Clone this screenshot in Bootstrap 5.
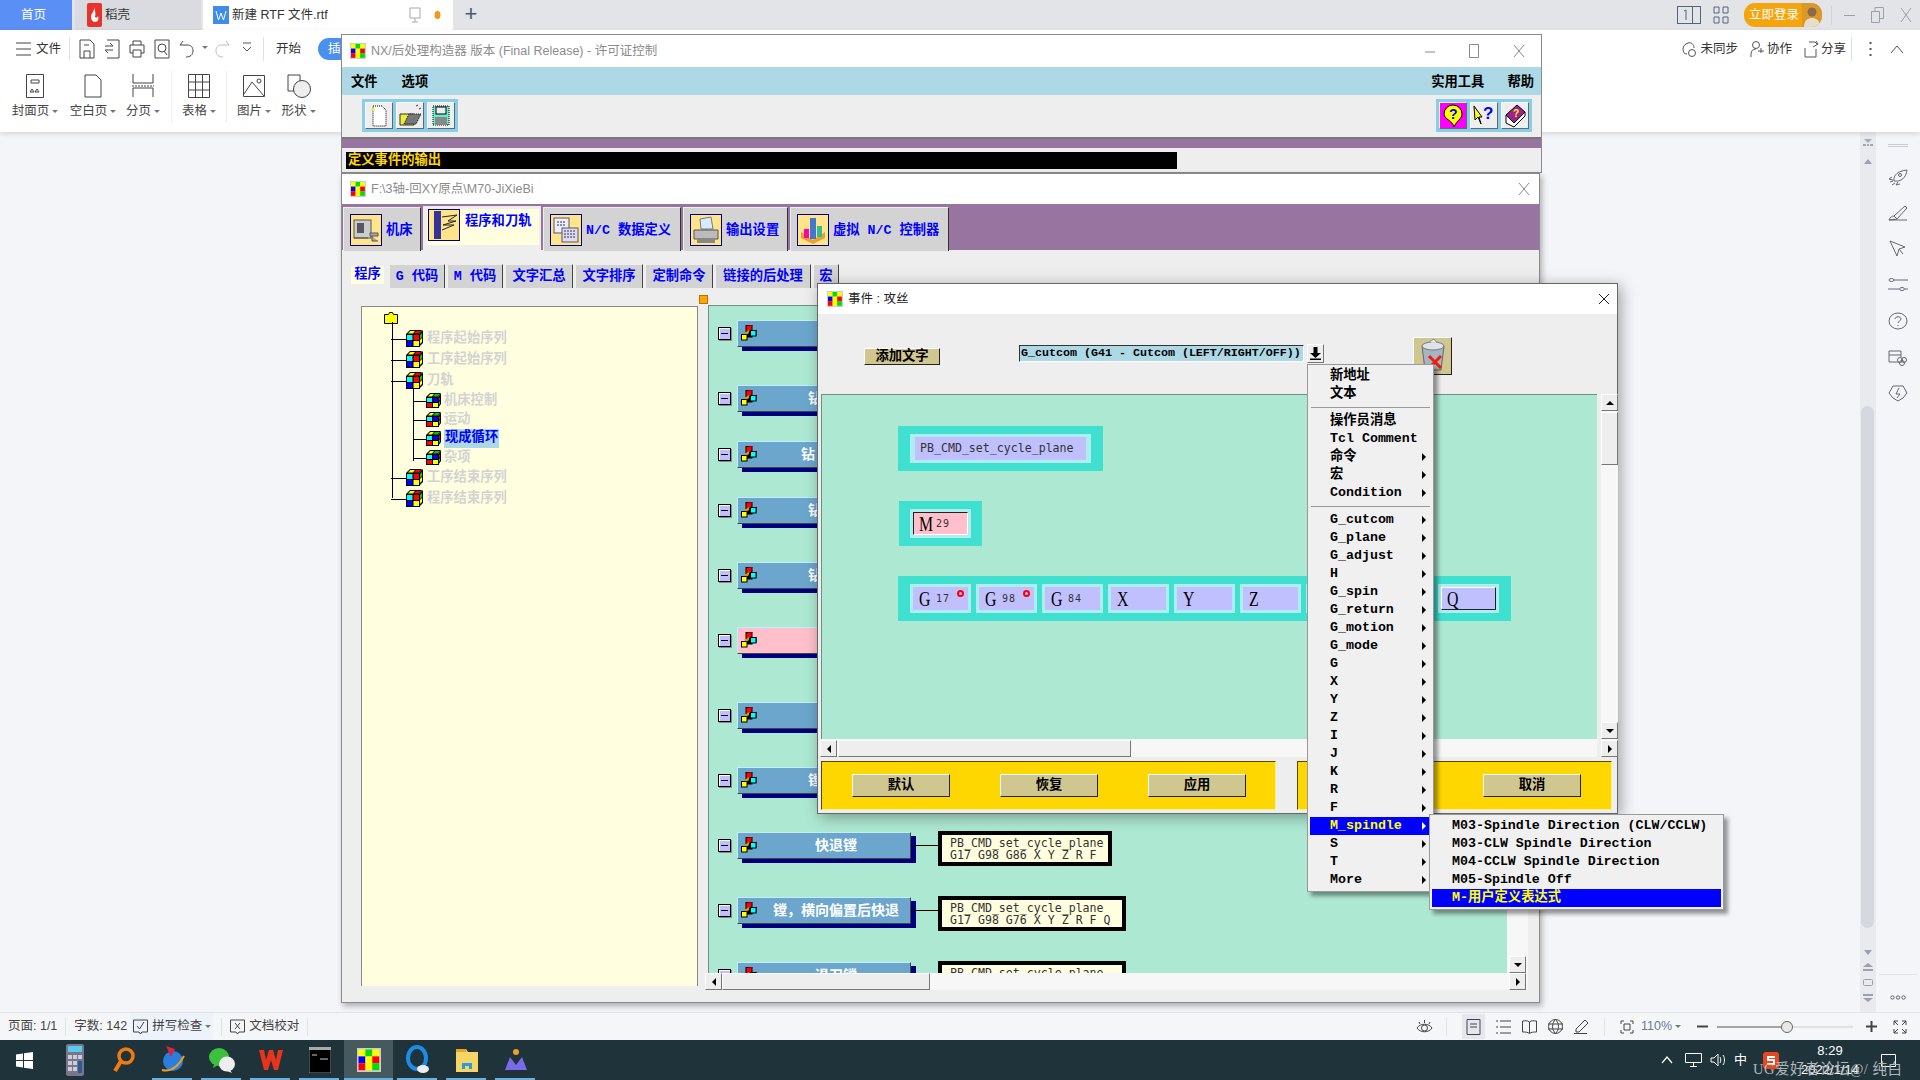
<!DOCTYPE html>
<html>
<head>
<meta charset="utf-8">
<title>NX 后处理构造器</title>
<link href="https://cdn.jsdelivr.net/npm/bootstrap@5.3.3/dist/css/bootstrap.min.css" rel="stylesheet">
<script src="https://cdn.jsdelivr.net/npm/bootstrap@5.3.3/dist/js/bootstrap.bundle.min.js"></script>
<style>
html, body { margin: 0; width: 1920px; height: 1080px; overflow: hidden; }
body { font-family: "Liberation Sans", "Noto Sans CJK SC", sans-serif; background: #f3f5f9; color: #333; }
svg { display: block; flex: none; }
.desk { width: 1920px; height: 1080px; }

/* wps chrome */
.top-strip { height: 30px; background: #e2e4e8; font-size: 12.5px; flex: none; }
.tab-home { width: 72px; background: #5a8ff5; color: #fff; justify-content: center; padding-right: 5px; }
.tab-shell { width: 126px; margin-left: 3px; background: #d9dbe0; padding-left: 12px; gap: 3px; }
.tab-doc { width: 250px; margin-left: 2px; background: #fff; padding-left: 10px; gap: 3px; }
.doc-screen { margin-left: auto; }
.doc-dot { margin: 0 12px 0 10px; }
.plus-sign { width: 36px; text-align: center; font-size: 22px; color: #4a5870; line-height: 28px; }
.strip-right { gap: 12px; }
.login-pill { width: 78px; height: 24px; margin-left: 3px; background: #f5a40c; border-radius: 11px; color: #fff; font-size: 12.5px; padding-left: 5px; overflow: hidden; }
.strip-sep { width: 1px; height: 20px; background: #d2d4d9; margin-left: -3px; }
.strip-ctl { gap: 16px; margin: 0 8px 0 0; }
.ribbon { height: 102px; background: #fff; box-shadow: 0 2px 5px rgba(0,0,0,.12); flex: none; position: relative; z-index: 1; font-size: 12.5px; }
.rib-line { height: 38px; }
.file-word { margin-left: 5px; }
.rib-ico { width: 25px; display: flex; justify-content: center; }
.rib-tip { width: 10px; }
.rib-sep { width: 1px; height: 24px; background: #dfe1e5; }
.rib-start { margin-left: 12px; }
.rib-pill { width: 60px; height: 22px; margin-left: 17px; background: #4a90ee; color: #fff; border-radius: 11px; padding-left: 10px; line-height: 22px; }
.rib-right { padding-right: 16px; }
.word-tight { margin-left: -6px; }
.share-sep { margin-left: -3px; }
.dots-gap { margin-left: 9px; }
.up-gap { margin-left: 10px; }
.rib-big { height: 64px; }
.big-item { font-size: 12.5px; text-align: center; padding-top: 6px; color: #444; }
.big-item svg { margin: 0 auto 4px; }
.big-sep { width: 1px; height: 52px; background: #eceef1; margin: 3px 5px 0; }
.w-44 { width: 44px; } .w-45 { width: 45px; } .w-46 { width: 46px; } .w-54 { width: 54px; }
.drop-tip { display: inline-block; border: 3px solid transparent; border-top: 3px solid #777; margin-left: 3px; vertical-align: -1px; }
.side-track { width: 16px; background: #e8eaee; position: relative; gap: 4px; padding-top: 6px; }
.track-thumb { position: absolute; left: 1px; right: 2px; top: 274px; height: 522px; background: #d5d8df; border-radius: 7px; }
.track-foot { position: absolute; bottom: 4px; left: 0; right: 0; gap: 8px; padding-bottom: 6px; }
.side-rail { width: 44px; padding-top: 12px; align-items: center; position: relative; }
.rail-lines { margin-bottom: 20px; }
.side-rail .rail-ico { margin-bottom: 16px; }
.rail-foot { position: absolute; bottom: 12px; left: 3px; right: 3px; border-top: 1px solid #e2e4e8; padding-top: 20px; }
.stat-line { height: 28px; background: #f5f6f8; border-top: 1px solid #e1e3e6; font-size: 12.5px; flex: none; color: #444; }
.stat-sep { width: 1px; height: 18px; background: #e1e3e6; }
.spell-chip { background: #eef3fb; height: 27px; padding: 0 2px; margin-left: 4px; gap: 4px; }
.stat-right { padding-right: 13px; }
.eye-sep { margin: 0 15px 0 13px; }
.view-on { background: #e4e8ee; width: 23px; height: 25px; }
.view-gap { margin-left: 11px; }
.fit-sep { margin: 0 15px 0 14px; }
.zoom-word { color: #6b7c93; margin-left: 7px; }
.task-bar { height: 40px; background: #1f333b; flex: none; color: #fff; }
.task-start { width: 49px; }
.task-btn { width: 49px; height: 40px; position: relative; }
.task-first { margin-left: 1px; }
.task-btn.is-open::after { content: ""; position: absolute; left: 4px; right: 5px; bottom: 0; height: 2px; background: #6ab0de; }
.task-btn.is-front { background: #45595f; }
.task-btn.is-front::after { left: 0; right: 0; }
.tray-ime { font-size: 13px; }
.tray-clock { width: 70px; text-align: center; font-size: 13px; line-height: 19px; color: #fff; margin-left: 16px; }
.mark-text { position: absolute; z-index: 5; left: 1753px; top: 1059px; font-family: "Liberation Serif", "Noto Sans CJK SC", serif; font-size: 14.5px; color: #b0b8bb; letter-spacing: .5px; }

/* tk windows */
.app-win { position: absolute; background: #eee; border: 1px solid #8a8a8a; }
.win-post { left: 341px; top: 34px; width: 1201px; height: 139px; z-index: 2; }
.win-cfg { left: 341px; top: 173px; width: 1199px; height: 830px; z-index: 3; box-shadow: 2px 3px 6px rgba(0,0,0,.3); }
.win-evt { left: 817px; top: 283px; width: 801px; height: 531px; z-index: 4; border-color: #666; box-shadow: 3px 3px 14px rgba(0,0,0,.35); }
.win-head { background: #fff; height: 32px; padding-left: 8px; gap: 5px; font-size: 12.5px; color: #8c8c8c; }
.head-short { height: 30px; }
.win-btns { margin-left: auto; padding-right: 15px; gap: 32px; }
.cfg-close { padding-right: 8px; }
.evt-close { padding-right: 6px; }
.bit-text { font-family: "Liberation Mono", "Noto Sans CJK SC", monospace; font-weight: 700; font-size: 13.3px; line-height: 18px; }
.menu-line { height: 28px; background: #add8e6; padding: 3px 7px 0 9px; color: #000; }
.menu-gap { margin-left: 24px; }
.help-gap { margin-left: 23px; }
.tool-line { height: 42px; padding: 4px 9px 0 20px; }
.tool-set { background: #87ceeb; height: 33px; padding: 3px; gap: 3px; }
.tool-btn { width: 28px; height: 27px; background: #eee; border: 1px solid; border-color: #fff #666 #666 #fff; display: flex; justify-content: center; }
.tool-hot { background: #f0f; }
.purple-bar { height: 9px; background: #9775a0; border-top: 2px solid #777; box-sizing: content-box; }
.title-bar { height: 17px; width: 831px; margin: 4px 0 0 4px; background: #000; color: #ffd700; padding-left: 2px; line-height: 17px; }
.main-tabs { height: 46px; background: #9775a0; padding: 2px 0 0 1px; gap: 2px; }
.main-tab { height: 44px; margin-top: 1px; background: #d3d3d3; color: #00f; padding: 6px 0 0 6px; gap: 4px; border-top: 1px solid #eee; border-left: 1px solid #eee; border-right: 1px solid #333; }
.main-tab.is-active { height: 44px; background: #eee; margin-top: 0; padding: 3px 2px 5px 4px; border: 0; }
.tab-m { width: 78px; } .tab-p { width: 118px; } .tab-d { width: 138px; } .tab-o { width: 105px; } .tab-v { width: 159px; }
.tab-fill { background: #ffffe0; width: 100%; gap: 5px; padding-left: 1px; height: 36px; }
.art-box { width: 32px; height: 32px; background: #ffe48a; border: 1px solid #00007f; }
.sub-tabs { height: 24px; margin: 14px 0 0 6px; gap: 2px; }
.sub-tab { background: #d3d3d3; color: #00f; justify-content: center; border-top: 1px solid #eee; border-left: 1px solid #eee; border-right: 1px solid #444; height: 24px; }
.sub-tab.is-active { background: #eee; border: 0; }
.sub-fill { background: #ffffe0; padding: 0 3px; height: 18px; line-height: 18px; margin-top: -3px; }
.tree-pane { width: 337px; height: 680px; margin: 18px 0 0 19px; background: #ffffe0; border: 1px solid #8a8a8a; border-bottom: 0; position: relative; padding-top: 21px; }
.tree-row { gap: 4px; color: #d3d3d3; position: relative; }
.tree-row.is-top { margin-left: 44px; }
.tree-row.is-sub { margin-left: 64px; gap: 3px; }
.tree-row::before { content: ""; position: absolute; top: 50%; height: 1px; background: #000; left: -15px; width: 15px; }
.tree-row.is-sub::before { left: -13px; width: 13px; }
.tree-pick { background: #add8e6; color: #00f; padding: 0 1px; height: 19px; }
.tree-stem { position: absolute; width: 1px; background: #000; }
.stem-main { left: 30px; top: 15px; height: 176px; }
.stem-sub { left: 51px; top: 76px; height: 78px; }
.folder-ico { position: absolute; left: 22px; top: 5px; }
.sash-col { width: 10px; position: relative; }
.sash-dot { position: absolute; left: 1px; top: 7px; width: 9px; height: 9px; background: #ffa500; border: 1px solid #b37400; }
.cfg-grid { display: grid; grid-template-columns: 799px 21px; grid-template-rows: 668px 17px; margin-top: 17px; }
.node-canvas { position: relative; overflow: hidden; background: #ade8d2; border: 1px solid #6f8f84; border-width: 1px 0 0 1px; }
.ev-btn { position: absolute; left: 28px; width: 174px; height: 27px; background: #6ca6cd; color: #fff; border: 1px solid; border-color: #bfefff #444 #444 #bfefff; box-shadow: 5px 4px 0 #00007f; text-align: center; font-size: 14px; line-height: 26px; font-weight: 700; padding-left: 24px; }
.ev-btn.is-hot { background: #ffc0cb; }
.ev-btn svg { position: absolute; left: 3px; top: 4px; }
.ev-minus { position: absolute; left: 9px; width: 13px; height: 13px; background: #c0c0ff; border: 1px solid #000; box-shadow: inset 1px 1px 0 #fff, 1px 1px 0 #888; }
.ev-minus::after { content: ""; position: absolute; left: 2px; right: 2px; top: 5px; height: 1px; background: #000; }
.ev-link { position: absolute; left: 202px; width: 28px; height: 1px; background: #000; }
.ev-note { position: absolute; left: 229px; height: 35px; background: #ffffe0; border: 4px solid #000; padding: 2px 0 0 8px; font-family: "DejaVu Sans Mono", monospace; font-weight: 400; font-size: 11.6px; line-height: 12px; color: #333; white-space: pre; }
.scroll-y, .scroll-x { background: #f7f7f7; position: relative; }
.scroll-cap { position: absolute; width: 17px; height: 17px; background: #eee; border: 1px solid; border-color: #fff #777 #777 #fff; display: flex; align-items: center; justify-content: center; }
.scroll-thumb { position: absolute; background: #eee; border: 1px solid; border-color: #fff #777 #777 #fff; }
.cap-top { top: 0; left: 0; }
.cap-bottom { bottom: 0; left: 0; }
.cap-node-down { bottom: 0; left: 2px; }
.cap-node-left { left: -3px; top: 0; }
.cap-node-right { left: 2px; top: 0; }
.thumb-node { left: 14px; top: 0; width: 208px; height: 17px; }
.cap-evt-left { left: -1px; top: 1px; }
.cap-evt-right { left: 0; top: 1px; }
.thumb-evt-x { left: 17px; top: 1px; width: 293px; height: 17px; }
.thumb-evt-y { top: 18px; left: 0; width: 17px; height: 53px; }
.tri-up, .tri-down, .tri-left, .tri-right { width: 0; height: 0; border: 4px solid transparent; }
.tri-up { border-bottom-color: #000; margin-top: -4px; }
.tri-down { border-top-color: #000; margin-top: 4px; }
.tri-left { border-right-color: #000; margin-left: -4px; }
.tri-right { border-left-color: #000; margin-left: 4px; }

/* event dialog */
.evt-head { color: #222; padding-left: 9px; }
.evt-top { height: 80px; padding: 23px 0 0 46px; }
.add-word { width: 76px; height: 17px; margin-top: 11px; background: #d0c690; border: 1px solid; border-color: #fff #222 #222 #fff; color: #000; text-align: center; line-height: 15px; }
.combo-field { width: 285px; height: 17px; margin: 8px 0 0 79px; background: #add8e6; border: 1px solid; border-color: #333 #fff #fff #333; color: #000; padding-left: 1px; line-height: 15px; white-space: pre; font-size: 11.67px; overflow: hidden; }
.combo-drop { width: 17px; height: 19px; margin: 7px 0 0 3px; background: #eee; border: 1px solid; border-color: #fff #777 #777 #fff; }
.bin-btn { width: 39px; height: 38px; margin-left: 89px; background: #d0c690; border: 1px solid; border-color: #fff #222 #222 #fff; }
.evt-grid { display: grid; grid-template-columns: 776px 21px; grid-template-rows: 345px 18px; margin-left: 3px; }
.evt-canvas { position: relative; overflow: hidden; background: #ade8d2; border-top: 1px solid #6f8f84; border-left: 1px solid #6f8f84; }
.word-band { position: absolute; height: 45px; background: #40e0d0; padding-left: 12px; gap: 5px; }
.band-a { left: 76px; top: 31px; width: 205px; }
.band-b { left: 77px; top: 106px; width: 83px; padding-left: 11px; }
.band-c { left: 76px; top: 181px; width: 613px; }
.word-cell { width: 61px; height: 29px; background: #afeeee; padding: 3px; flex: none; position: relative; }
.word-in { width: 55px; height: 23px; background: #c0c0ff; padding-left: 6px; gap: 4px; color: #000; }
.word-in.is-wide { width: 171px; padding-left: 5px; }
.word-in.is-pink { background: #ffc0cb; border: 1px solid; border-color: #222 #fff #fff #222; padding-left: 5px; }
.word-in.is-raised { border: 1px solid; border-color: #fff #222 #222 #fff; padding-left: 5px; }
.word-big { font-family: "Liberation Serif", serif; font-size: 22px; line-height: 23px; width: 13px; display: inline-block; transform-origin: left center; transform: scaleX(.72); }
.word-num { font-family: "DejaVu Sans Mono", monospace; font-size: 10px; color: #333; letter-spacing: 1px; }
.word-code { font-family: "DejaVu Sans Mono", monospace; font-size: 11.6px; color: #333; }
.word-ring { position: absolute; right: 7px; top: 6px; width: 7px; height: 7px; border: 2px solid #f00; border-radius: 50%; }
.cell-wide { width: 181px; }
.gold-row { margin: 4px 0 0 3px; gap: 21px; }
.gold-box { height: 49px; background: #ffd700; border-top: 1px solid #554800; border-left: 1px solid #554800; border-bottom: 1px solid #fff09a; border-right: 1px solid #fff09a; padding: 12px 0 0 30px; gap: 50px; }
.gold-a { width: 455px; }
.gold-b { width: 315px; }
.gold-btn { width: 98px; height: 23px; background: #d0c690; border: 1px solid; border-color: #fff #222 #222 #fff; color: #000; text-align: center; line-height: 21px; }
.gold-last { margin-left: 7px; }

/* popup menus */
.pop-menu { position: absolute; z-index: 6; background: #f0f0f0; border: 1px solid #999; box-shadow: 4px 4px 4px rgba(0,0,0,.4); color: #000; padding: 2px; }
.menu-main { left: 1307px; top: 364px; width: 127px; height: 528px; }
.menu-sub { left: 1429px; top: 814px; width: 295px; height: 96px; z-index: 7; padding-top: 2px; }
.pop-item { height: 18px; padding-left: 20px; position: relative; line-height: 18px; white-space: pre; }
.pop-item.is-pick { background: #00f; color: #ff0; }
.pop-item.has-kid::after { content: ""; position: absolute; right: 5px; top: 5px; border: 4px solid transparent; border-left: 4px solid #000; border-right: 0; }
.pop-item.is-pick.has-kid::after { border-left-color: #fff; }
.pop-rule { height: 1px; background: #999; margin: 4px 1px; }
</style>
</head>
<body>

<svg width="0" height="0" class="position-absolute">
	<symbol id="palette" viewBox="0 0 16 16">
		<rect width="16" height="16" fill="#ccc"/>
		<rect x="1" y="1" width="4.6" height="4.6" fill="#ff0"/><rect x="5.6" y="1" width="4.6" height="4.6" fill="#0d0"/><rect x="10.2" y="1" width="4.6" height="4.6" fill="#ff0"/>
		<rect x="1" y="5.6" width="4.6" height="4.6" fill="#00f"/><rect x="5.6" y="5.6" width="4.6" height="4.6" fill="#ff0"/><rect x="10.2" y="5.6" width="4.6" height="4.6" fill="#f00"/>
		<rect x="1" y="10.2" width="4.6" height="4.6" fill="#f00"/><rect x="5.6" y="10.2" width="4.6" height="4.6" fill="#ff0"/><rect x="10.2" y="10.2" width="4.6" height="4.6" fill="#0d0"/>
	</symbol>
	<symbol id="cube-a" viewBox="0 0 17 17">
		<polygon points="0,4 4,0 16,0 13,4" fill="#000"/><polygon points="2,3.4 4.4,1 9,1 7,3.4" fill="#ff0"/><polygon points="8,3.4 10,1 15,1 12.6,3.4" fill="#f00"/>
		<polygon points="13,4 16,0.5 17,0.5 17,13 13,17" fill="#000"/><polygon points="14,5 16,3 16,7 14,9" fill="#0c0"/><polygon points="14,10 16,8 16,12 14,14" fill="#ff0"/>
		<rect y="4" width="14" height="13" fill="#000"/><rect x="1" y="5" width="5.5" height="5" fill="#0ff"/><rect x="7.5" y="5" width="5.5" height="5" fill="#f00"/><rect x="1" y="11" width="5.5" height="5" fill="#00f"/><rect x="7.5" y="11" width="5.5" height="5" fill="#ff0"/>
	</symbol>
	<symbol id="cube-b" viewBox="0 0 15 15">
		<polygon points="0,4 4,0 15,0 12,4" fill="#000"/><polygon points="2,3.4 4.4,1 8,1 6,3.4" fill="#ff0"/><polygon points="7,3.4 9,1 14,1 11.6,3.4" fill="#0c0"/>
		<polygon points="12,4 15,0.5 15,11 12,15" fill="#000"/><polygon points="13,5 14,4 14,7 13,8" fill="#f00"/><polygon points="13,9 14,8 14,11 13,12" fill="#0c0"/>
		<rect y="4" width="13" height="11" fill="#000"/><rect x="1" y="5" width="5" height="4" fill="#0ff"/><rect x="7" y="5" width="5" height="4" fill="#00f"/><rect x="1" y="10" width="5" height="4" fill="#f00"/><rect x="7" y="10" width="5" height="4" fill="#ff0"/>
	</symbol>
	<symbol id="cube-c" viewBox="0 0 16 16">
		<rect x="5.5" y="7" width="5.5" height="5" fill="#000" stroke="#000"/>
		<rect x="5" y="0.5" width="6" height="6" fill="#f00" stroke="#000"/><polygon points="6,0.5 8,0 12,0 11,1" fill="#a00"/>
		<rect x="9.5" y="5.5" width="5.5" height="5.5" fill="#0ff" stroke="#000"/><polygon points="15,5.5 16,4.5 16,10 15,11" fill="#222"/>
		<rect x="0.5" y="9.5" width="5.5" height="5.5" fill="#ff0" stroke="#000"/><polygon points="3,8 8,5 8,8 6,9.5" fill="#c90"/>
	</symbol>
	<symbol id="x-mark" viewBox="0 0 14 14"><path d="M2 1l10 12M12 1L2 13" stroke="#8a8a8a" fill="none"/></symbol>
</svg>

<div class="desk d-flex flex-column">
	<!-- tab strip -->
	<div class="top-strip d-flex">
		<div class="tab-home d-flex align-items-center">首页</div>
		<div class="tab-shell d-flex align-items-center">
			<svg width="15" height="24" viewBox="0 0 15 24"><rect width="15" height="24" rx="2" fill="#e8322c"/><path d="M7 4c1 4-3 6-3 10 0 3 2 5 4 5 3 0 4-3 3-6-1 2-2 2-3 1 1-3 0-7-1-10z" fill="#fff"/></svg>
			<span>稻壳</span>
		</div>
		<div class="tab-doc d-flex align-items-center">
			<svg width="16" height="18" viewBox="0 0 16 18"><rect width="16" height="18" fill="#3f8ceb"/><path d="M3 5l2.5 9L8 7l2.5 7L13 5" stroke="#fff" fill="none"/></svg>
			<span>新建 RTF 文件.rtf</span>
			<svg class="doc-screen" width="12" height="18" viewBox="0 0 12 18"><rect x="1" y="2" width="10" height="10" fill="none" stroke="#aaa"/><path d="M6 12v4M3 16h6" stroke="#aaa"/></svg>
			<svg class="doc-dot" width="7" height="8" viewBox="0 0 7 8"><ellipse cx="3.5" cy="4" rx="3" ry="4" fill="#f09a1c"/></svg>
		</div>
		<div class="plus-sign">+</div>
		<div class="ms-auto d-flex align-items-center strip-right">
			<svg width="24" height="20" viewBox="0 0 24 20"><rect x="0.5" y="1.5" width="23" height="17" fill="none" stroke="#55647c"/><path d="M15.5 1v18M7 6l2-1v10" stroke="#55647c" fill="none"/></svg>
			<svg width="16" height="20" viewBox="0 0 16 20"><path d="M1 2h5v6H1zM10 2h5v6h-5zM1 12h5v6H1zM10 12h5v6h-5z" fill="none" stroke="#55647c"/></svg>
			<div class="login-pill d-flex align-items-center justify-content-between">立即登录
				<svg width="20" height="24" viewBox="0 0 20 24"><rect width="20" height="24" fill="#d9982a"/><circle cx="10" cy="9" r="4.500" fill="#8a6a4a"/><path d="M2 24c0-7 4-9 8-9s8 2 8 9z" fill="#e8dccb"/></svg>
			</div>
			<div class="strip-sep"></div>
			<div class="strip-ctl d-flex align-items-center">
				<svg width="11" height="3" viewBox="0 0 11 3"><path d="M0 1.500h11" stroke="#9aa0aa"/></svg>
				<svg width="13" height="16" viewBox="0 0 13 16"><path d="M.5 4.500h8v11h-8zM4 4V.5h8.500v11H9" fill="none" stroke="#9aa0aa"/></svg>
				<svg width="12" height="16" viewBox="0 0 12 16"><path d="M1 1l10 14M11 1L1 15" fill="none" stroke="#9aa0aa"/></svg>
			</div>
		</div>
	</div>

	<!-- ribbon -->
	<div class="ribbon">
		<div class="rib-line d-flex align-items-center">
			<svg class="ms-3" width="15" height="14" viewBox="0 0 15 14"><path d="M0 1h15M0 7h15M0 13h15" stroke="#444"/></svg>
			<span class="file-word">文件</span>
			<div class="rib-sep ms-2"></div>
			<div class="d-flex ms-1">
				<div class="rib-ico"><svg width="16" height="20" viewBox="0 0 16 20"><path d="M1 1h10l4 4v14H1zM5 19v-7h6v7M5 6h5" fill="none" stroke="#444"/></svg></div>
				<div class="rib-ico"><svg width="16" height="20" viewBox="0 0 16 20"><path d="M3 1h12v18H3M1 7h8l-3-3M9 11H1l3 3" fill="none" stroke="#444"/></svg></div>
				<div class="rib-ico"><svg width="16" height="20" viewBox="0 0 16 20"><path d="M4 6V2h8v4M4 14H1V6h14v8h-3M4 11h8v7H4z" fill="none" stroke="#444"/></svg></div>
				<div class="rib-ico"><svg width="16" height="20" viewBox="0 0 16 20"><path d="M1 1h14v18H1z" fill="none" stroke="#444"/><circle cx="8" cy="9" r="4" fill="none" stroke="#444"/><path d="M10 12l3 4" stroke="#444"/></svg></div>
				<div class="rib-ico"><svg width="16" height="20" viewBox="0 0 16 20"><path d="M4 2L1 6h7c4 0 6 2 6 6s-3 6-7 6" fill="none" stroke="#444"/></svg></div>
				<div class="rib-tip d-flex align-items-center"><span class="drop-tip"></span></div>
				<div class="rib-ico"><svg width="16" height="20" viewBox="0 0 16 20"><path d="M12 2l3 4H8C4 6 2 8 2 12s3 6 7 6" fill="none" stroke="#bbb"/></svg></div>
				<div class="rib-ico"><svg width="10" height="20" viewBox="0 0 10 20"><path d="M1 4h8M1 8l4 4 4-4" fill="none" stroke="#555"/></svg></div>
			</div>
			<div class="rib-sep ms-1"></div>
			<span class="rib-start">开始</span>
			<div class="rib-pill">插入</div>
			<div class="ms-auto d-flex align-items-center gap-2 rib-right">
				<svg width="16" height="18" viewBox="0 0 16 18"><path d="M5 14C2 14 1 12 1 9s2-5 5-6c3-1 6 1 6 5" fill="none" stroke="#555"/><circle cx="10" cy="13" r="3.5" fill="none" stroke="#555"/></svg>
				<span class="word-tight">未同步</span>
				<svg class="ms-1" width="15" height="18" viewBox="0 0 15 18"><circle cx="6" cy="5" r="3.5" fill="none" stroke="#555"/><path d="M1 17v-3c0-3 2-5 5-5M11 8v5M8 11h6" fill="none" stroke="#555"/></svg>
				<span class="word-tight">协作</span>
				<svg class="ms-1" width="15" height="18" viewBox="0 0 15 18"><path d="M5 2h6l3 3v0M1 8v9h11V9M12 1l2 3-5 3" fill="none" stroke="#555"/></svg>
				<span class="word-tight">分享</span>
				<div class="rib-sep share-sep"></div>
				<svg class="dots-gap" width="3" height="16" viewBox="0 0 3 16"><path d="M1.5 1v2M1.5 7v2M1.5 13v2" stroke="#555" stroke-width="2"/></svg>
				<svg class="up-gap" width="14" height="9" viewBox="0 0 14 9"><path d="M1 8l6-7 6 7" fill="none" stroke="#555"/></svg>
			</div>
		</div>
		<div class="rib-big d-flex ps-2">
			<div class="big-item w-54"><svg width="18" height="24" viewBox="0 0 18 24"><path d="M0.5 0.5h17v23H.5z" fill="none" stroke="#444"/><path d="M5 6h8v3H5zM4 18l2-3 2 3zM9 18l2-3 2 3z" fill="none" stroke="#444"/></svg>封面页<i class="drop-tip"></i></div>
			<div class="big-item w-54 ms-1"><svg width="18" height="24" viewBox="0 0 18 24"><path d="M1 1h11l5 5v17H1z" fill="none" stroke="#444"/></svg>空白页<i class="drop-tip"></i></div>
			<div class="big-item w-46"><svg width="22" height="24" viewBox="0 0 22 24"><path d="M1 0v9h20V0M1 23v-9h20v9" fill="none" stroke="#444"/><path d="M0 12h22" stroke="#444" stroke-dasharray="2 1"/></svg>分页<i class="drop-tip"></i></div>
			<div class="big-sep"></div>
			<div class="big-item w-44"><svg width="22" height="24" viewBox="0 0 22 24"><path d="M.5.5h21v23H.5zM.5 8h21M.5 16h21M7.5.5v23M14.5.5v23" fill="none" stroke="#444"/></svg>表格<i class="drop-tip"></i></div>
			<div class="big-sep"></div>
			<div class="big-item w-44"><svg width="22" height="24" viewBox="0 0 22 24"><path d="M.5 1.500h21v21H.5z" fill="none" stroke="#444"/><path d="M1 20l8-12 12 14" fill="none" stroke="#444"/><circle cx="16" cy="7" r="2" fill="none" stroke="#444"/></svg>图片<i class="drop-tip"></i></div>
			<div class="big-item w-45"><svg width="24" height="24" viewBox="0 0 24 24"><path d="M1 1h12v16H1z" fill="none" stroke="#444"/><circle cx="15" cy="15" r="8.500" fill="#eee" stroke="#444"/></svg>形状<i class="drop-tip"></i></div>
		</div>
	</div>

	<!-- document area -->
	<div class="flex-grow-1 d-flex justify-content-end">
		<div class="side-track d-flex flex-column align-items-center">
			<svg width="10" height="9" viewBox="0 0 10 9"><path d="M1 1h8L5 5zM0 6h3v2H0zM4 6h2v2H4zM7 6h3v2H7z" fill="#a4aab5"/></svg>
			<svg class="mt-2" width="8" height="5" viewBox="0 0 8 5"><path d="M4 0l4 5H0z" fill="#9aa2ad"/></svg>
			<div class="track-thumb"></div>
			<div class="track-foot d-flex flex-column align-items-center">
				<svg width="8" height="5" viewBox="0 0 8 5"><path d="M4 5l4-5H0z" fill="#9aa2ad"/></svg>
				<svg width="10" height="8" viewBox="0 0 10 8"><path d="M5 0l5 4H0zM0 6h10v2H0z" fill="#9aa2ad"/></svg>
				<svg width="10" height="7" viewBox="0 0 10 7"><rect x=".5" y=".5" width="9" height="6" rx="1" fill="none" stroke="#9aa2ad"/></svg>
				<svg width="10" height="8" viewBox="0 0 10 8"><path d="M5 8l5-4H0zM0 0h10v2H0z" fill="#9aa2ad"/></svg>
			</div>
		</div>
		<div class="side-rail d-flex flex-column">
			<svg class="rail-lines" width="20" height="3" viewBox="0 0 20 3"><path d="M0 .5h20M0 2.500h20" stroke="#c9ccd2"/></svg>
			<svg class="rail-ico" width="20" height="20" viewBox="0 0 20 20"><path d="M6 14C5 8 10 4 19 3c-1 8-6 12-13 11zM4 10L1 12l4 1M10 15l-2 3 4-1M2 15l3-1M4 18l3-2" fill="none" stroke="#667"/><circle cx="12" cy="8" r="1.500" fill="none" stroke="#667"/></svg>
			<svg class="rail-ico" width="20" height="20" viewBox="0 0 20 20"><path d="M6 13L17 3l2 2L9 16zM1 17c1-3 3-4 5-4l3 3zM1 17h18" fill="none" stroke="#667"/></svg>
			<svg class="rail-ico" width="20" height="20" viewBox="0 0 20 20"><path d="M2 2l15 6-6 2-2 7zM11 10l4 5" fill="none" stroke="#667"/></svg>
			<svg class="rail-ico" width="20" height="20" viewBox="0 0 20 20"><ellipse cx="3.500" cy="5" rx="2.500" ry="1.500" fill="none" stroke="#667"/><ellipse cx="14" cy="14" rx="2.500" ry="1.500" fill="none" stroke="#667"/><path d="M6 5h14M0 14h11M17 14h3" stroke="#667"/></svg>
			<svg class="rail-ico" width="20" height="20" viewBox="0 0 20 20"><ellipse cx="10" cy="10" rx="9" ry="8" fill="none" stroke="#667"/><path d="M7 8c0-3 6-3 6 0 0 2-3 2-3 4M10 14v1" fill="none" stroke="#667"/></svg>
			<svg class="rail-ico" width="20" height="20" viewBox="0 0 20 20"><path d="M1 4h12M1 4v11h10M1 8h12M13 4v6" fill="none" stroke="#667"/><circle cx="12" cy="13" r="2.500" fill="none" stroke="#667"/><circle cx="16" cy="13" r="2.500" fill="none" stroke="#667"/><circle cx="14" cy="16" r="2.500" fill="none" stroke="#667"/></svg>
			<svg class="rail-ico" width="20" height="20" viewBox="0 0 20 20"><path d="M5 3h10l4 7-4 5-5 3-5-3-4-5z" fill="none" stroke="#667"/><path d="M11 5l-3 6h4l-3 4" fill="none" stroke="#667"/></svg>
			<div class="rail-foot d-flex justify-content-center">
				<svg width="16" height="5" viewBox="0 0 16 5"><circle cx="2.500" cy="2.500" r="1.700" fill="none" stroke="#667"/><circle cx="8" cy="2.500" r="1.700" fill="none" stroke="#667"/><circle cx="13.500" cy="2.500" r="1.700" fill="none" stroke="#667"/></svg>
			</div>
		</div>
	</div>

	<!-- status line -->
	<div class="stat-line d-flex align-items-center ps-2">
		<span>页面: 1/1</span><div class="stat-sep ms-2"></div>
		<span class="ms-2">字数: 142</span>
		<div class="spell-chip d-flex align-items-center">
			<svg width="15" height="18" viewBox="0 0 15 18"><path d="M.5 2h14v12H9l-1.500 2L6 14H.5zM4 8l2.500 3L11 4" fill="none" stroke="#444"/></svg>
			<span>拼写检查<i class="drop-tip"></i></span>
		</div>
		<div class="stat-sep ms-2"></div>
		<svg class="ms-2" width="15" height="18" viewBox="0 0 15 18"><path d="M.5 2h14v12H9l-1.500 2L6 14H.5zM5 5l5 6M10 5l-5 6" fill="none" stroke="#444"/></svg>
		<span class="ms-1">文档校对</span>
		<div class="stat-sep ms-2"></div>
		<div class="ms-auto d-flex align-items-center stat-right">
			<svg width="17" height="16" viewBox="0 0 17 16"><path d="M1 9c3-5 12-5 15 0-3 5-12 5-15 0z" fill="none" stroke="#444"/><circle cx="8.500" cy="9" r="3" fill="none" stroke="#444"/><path d="M3 3l1 2M8.500 1v3M14 3l-1 2" stroke="#444"/></svg>
			<div class="stat-sep eye-sep"></div>
			<div class="view-on d-flex align-items-center justify-content-center"><svg width="15" height="16" viewBox="0 0 15 16"><path d="M1 .5h13v15H1zM4 5h7M4 8h7" fill="none" stroke="#444"/></svg></div>
			<svg class="view-gap" width="15" height="14" viewBox="0 0 15 14"><path d="M4 1h11M0 1h2M4 7h11M0 7h2M4 13h11M0 13h2" stroke="#444"/></svg>
			<svg class="view-gap" width="15" height="14" viewBox="0 0 15 14"><path d="M7.500 2C5 0 3 1 .5 1v11c3 0 5 0 7 1.500 2-1.500 4-1.500 7-1.500V1c-3 0-5-1-7 1zv11" fill="none" stroke="#444"/></svg>
			<svg class="view-gap" width="15" height="15" viewBox="0 0 15 15"><circle cx="7.500" cy="7.500" r="7" fill="none" stroke="#444"/><path d="M0 5h15M0 10h15M7.500 .5c-4 4-4 10 0 14M7.500 .5c4 4 4 10 0 14" fill="none" stroke="#444"/></svg>
			<svg class="view-gap" width="16" height="15" viewBox="0 0 16 15"><path d="M2 10l9-9 3 3-9 9H2zM0 14.500h13" fill="none" stroke="#444"/></svg>
			<div class="stat-sep fit-sep"></div>
			<svg width="14" height="14" viewBox="0 0 14 14"><path d="M1 4V1h3M10 1h3v3M13 10v3h-3M4 13H1v-3M4 4h6v6H4z" fill="none" stroke="#444"/></svg>
			<span class="zoom-word">110%<i class="drop-tip"></i></span>
			<svg class="ms-3" width="11" height="3" viewBox="0 0 11 3"><path d="M0 1.500h11" stroke="#444" stroke-width="2"/></svg>
			<svg class="ms-2" width="146" height="14" viewBox="0 0 146 14"><path d="M1 7h70" stroke="#555"/><path d="M71 7h66" stroke="#ccc"/><circle cx="71" cy="7" r="5.500" fill="#e8e8e8" stroke="#666"/></svg>
			<svg class="ms-1" width="11" height="11" viewBox="0 0 11 11"><path d="M0 5.500h11M5.500 0v11" stroke="#444" stroke-width="2"/></svg>
			<svg class="ms-3" width="14" height="14" viewBox="0 0 14 14"><path d="M1 5V1h4M9 1h4v4M13 9v4H9M5 13H1V9M1 1l4 4M13 1L9 5M13 13L9 9M1 13l4-4" fill="none" stroke="#444"/></svg>
		</div>
	</div>

	<!-- taskbar -->
	<div class="task-bar d-flex align-items-center">
		<div class="task-start d-flex align-items-center justify-content-center"><svg width="17" height="17" viewBox="0 0 17 17"><path d="M0 2.500l7-1v6.500H0zM8 1.300L17 0v8H8zM0 9h7v6.500l-7-1zM8 9h9v8l-9-1.300z" fill="#fff"/></svg></div>
		<div class="task-btn task-first d-flex align-items-center justify-content-center"><svg width="18" height="32" viewBox="0 0 18 32"><rect width="18" height="32" rx="2" fill="#778"/><rect x="2" y="2" width="14" height="6" fill="#5ccbf0"/><path d="M2 11h4v4H2zM7 11h4v4H7zM12 11h4v4h-4zM2 17h4v4H2zM7 17h4v4H7zM2 23h4v4H2zM7 23h4v4H7z" fill="#ccd"/><rect x="12" y="17" width="4" height="12" fill="#2a5a9a"/></svg></div>
		<div class="task-btn d-flex align-items-center justify-content-center"><svg width="22" height="26" viewBox="0 0 22 26"><circle cx="13" cy="9" r="7" fill="none" stroke="#f07a10" stroke-width="3.500"/><path d="M8 14L2 24" stroke="#f07a10" stroke-width="4"/></svg></div>
		<div class="task-btn is-open d-flex align-items-center justify-content-center"><svg width="24" height="30" viewBox="0 0 24 30"><circle cx="12" cy="16" r="10" fill="#2a7de1"/><path d="M5 1l9 3-4 8z" fill="#d8243c"/><path d="M1 25c8 2 16-3 22-14" fill="none" stroke="#e8a020" stroke-width="2"/></svg></div>
		<div class="task-btn is-open d-flex align-items-center justify-content-center"><svg width="26" height="26" viewBox="0 0 26 26"><ellipse cx="10" cy="10" rx="10" ry="9" fill="#3cc13c"/><path d="M5 17l-1 4 5-3z" fill="#3cc13c"/><ellipse cx="18" cy="17" rx="8" ry="7.500" fill="#eee"/><path d="M21 23l2 3-5-2z" fill="#eee"/></svg></div>
		<div class="task-btn is-open d-flex align-items-center justify-content-center"><svg width="26" height="24" viewBox="0 0 26 24"><path d="M1 2l5 20h4l3-10 3 10h4l5-20h-5l-2 10-3-10h-4L8 12 6 2z" fill="#e8341c"/></svg></div>
		<div class="task-btn is-open d-flex align-items-center justify-content-center"><svg width="22" height="26" viewBox="0 0 22 26"><rect width="22" height="26" fill="#000" stroke="#888"/><rect width="22" height="3" fill="#aaa"/><path d="M3 8h5M11 12h8" stroke="#ccc"/></svg></div>
		<div class="task-btn is-open is-front d-flex align-items-center justify-content-center"><svg width="24" height="32"><use href="#palette"/></svg></div>
		<div class="task-btn is-open d-flex align-items-center justify-content-center"><svg width="24" height="30" viewBox="0 0 24 30"><ellipse cx="11" cy="13" rx="9" ry="11" fill="none" stroke="#1c8ce8" stroke-width="4"/><ellipse cx="17" cy="24" rx="6" ry="4" fill="#eee"/></svg></div>
		<div class="task-btn is-open d-flex align-items-center justify-content-center"><svg width="24" height="24" viewBox="0 0 24 24"><path d="M1 1h10l2 3h10v20H1z" fill="#f5d565"/><rect x="1" y="1" width="10" height="3" fill="#e5a525"/><path d="M7 21v-6h10v6h-3v-3h-4v3z" fill="#2a9ae8"/></svg></div>
		<div class="task-btn is-open d-flex align-items-center justify-content-center"><svg width="24" height="24" viewBox="0 0 24 24"><path d="M1 22l5-13 6 8 6-8 5 13z" fill="#7a6ae8"/><circle cx="12" cy="4" r="3" fill="#f0a020"/></svg></div>
		<div class="ms-auto d-flex align-items-center">
			<svg class="me-1" width="12" height="8" viewBox="0 0 12 8"><path d="M1 7l5-6 5 6" fill="none" stroke="#fff" stroke-width="1.200"/></svg>
			<svg class="ms-2" width="17" height="14" viewBox="0 0 17 14"><path d="M.5.500h16v9H.5zM8.500 10v3M5 13.500h7" fill="none" stroke="#fff"/></svg>
			<svg class="ms-2" width="16" height="14" viewBox="0 0 16 14"><path d="M1 5h3l4-4v12l-4-4H1zM10 4c1 2 1 4 0 6M13 2c2 3 2 7 0 10" fill="none" stroke="#fff"/></svg>
			<span class="ms-2 tray-ime">中</span>
			<svg class="ms-3" width="16" height="17" viewBox="0 0 16 17"><rect width="16" height="17" rx="3" fill="#e8461c"/><path d="M12 5H5v3h6v4H4" fill="none" stroke="#fff" stroke-width="2"/></svg>
			<div class="tray-clock">8:29<br>2022/1/14</div>
			<svg class="ms-3 me-4" width="15" height="13" viewBox="0 0 15 13"><path d="M.5.500h14v12H.5z" fill="none" stroke="#fff"/></svg>
		</div>
	</div>
</div>
<div class="mark-text">UG爱好者论坛@/ 纯白</div>

<!-- NX main window -->
<section class="app-win win-post">
	<div class="win-head d-flex align-items-center">
		<svg width="16" height="16"><use href="#palette"/></svg>
		<span>NX/后处理构造器 版本 (Final Release) - 许可证控制</span>
		<div class="win-btns d-flex align-items-center">
			<svg width="12" height="12" viewBox="0 0 12 12"><path d="M1 7h10" stroke="#8a8a8a"/></svg>
			<svg width="12" height="14" viewBox="0 0 12 14"><path d="M1.500.5h9v13h-9z" fill="none" stroke="#8a8a8a"/></svg>
			<svg width="14" height="14"><use href="#x-mark"/></svg>
		</div>
	</div>
	<div class="menu-line bit-text d-flex align-items-center">
		<span>文件</span><span class="menu-gap">选项</span>
		<span class="ms-auto">实用工具</span><span class="help-gap">帮助</span>
	</div>
	<div class="tool-line d-flex justify-content-between">
		<div class="tool-set d-flex">
			<div class="tool-btn"><svg width="24" height="25" viewBox="0 0 24 25"><path d="M6 3h9l4 4v16H6z" fill="#fff" stroke="#000" stroke-dasharray="1 1"/><path d="M6 4l1 2 2 .5-2 .5-1 2-1-2-2-.5 2-.5z" fill="#ee3"/></svg></div>
			<div class="tool-btn"><svg width="24" height="25" viewBox="0 0 24 25"><path d="M2 11h14v11H2z" fill="#ee3" stroke="#333"/><path d="M6 21l5-10h12l-5 10z" fill="#777" stroke="#000" stroke-dasharray="1 1"/><path d="M18 3l2-1M21 6l2-1" stroke="#333"/></svg></div>
			<div class="tool-btn"><svg width="24" height="25" viewBox="0 0 24 25"><path d="M4 3h16v19H4z" fill="#6ec" stroke="#000" stroke-dasharray="1 1"/><rect x="7" y="4" width="10" height="7" fill="#eee" stroke="#000"/><rect x="6" y="14" width="12" height="8" fill="#888"/></svg></div>
		</div>
		<div class="tool-set d-flex">
			<div class="tool-btn tool-hot"><svg width="26" height="25" viewBox="0 0 24 25"><path d="M3 11a9 9 0 1 1 18 0c0 5-5 6-8 13-1-6-10-8-10-13z" fill="#ff0" stroke="#000"/><text x="8" y="16" font-size="14" font-weight="700" fill="#00f" font-family="Liberation Sans">?</text></svg></div>
			<div class="tool-btn"><svg width="24" height="25" viewBox="0 0 24 25"><path d="M2 3l8 11-3 0 2 7-3-7-3 3z" fill="#ff0" stroke="#000"/><text x="11" y="16" font-size="17" font-weight="700" fill="#00f" font-family="Liberation Sans">?</text></svg></div>
			<div class="tool-btn"><svg width="24" height="25" viewBox="0 0 24 25"><path d="M3 12L14 2l8 7-11 11z" fill="#a0208f" stroke="#000"/><path d="M3 12v8l8 4 11-11V9L11 20z" fill="#fff" stroke="#000"/><text x="10" y="14" font-size="10" font-weight="700" fill="#ff0" font-family="Liberation Sans">?</text></svg></div>
		</div>
	</div>
	<div class="purple-bar"></div>
	<div class="title-bar bit-text">定义事件的输出</div>
</section>

<!-- post configuration window -->
<section class="app-win win-cfg">
	<div class="win-head head-short d-flex align-items-center">
		<svg width="16" height="16"><use href="#palette"/></svg>
		<span>F:\3轴-回XY原点\M70-JiXieBi</span>
		<div class="win-btns cfg-close"><svg width="14" height="14"><use href="#x-mark"/></svg></div>
	</div>
	<div class="main-tabs d-flex bit-text">
		<div class="main-tab tab-m d-flex">
			<div class="art-box"><svg width="30" height="30" viewBox="0 0 30 30"><rect x="3" y="5" width="17" height="18" fill="#ccc" stroke="#555"/><rect x="6" y="8" width="7" height="10" fill="#556"/><path d="M19 18h8v3h-8zM21 21v5h6M3 23h14" fill="#aaa" stroke="#555"/></svg></div><span class="mt-2">机床</span>
		</div>
		<div class="main-tab is-active tab-p">
			<div class="tab-fill d-flex">
				<div class="art-box"><svg width="30" height="30" viewBox="0 0 30 30"><rect x="5" y="1" width="7" height="28" fill="#339"/><path d="M13 7l15-2-9 6h8L14 15h11l-12 5" fill="none" stroke="#222"/></svg></div>
				<span class="mt-1">程序和刀轨</span>
			</div>
		</div>
		<div class="main-tab tab-d d-flex">
			<div class="art-box"><svg width="30" height="30" viewBox="0 0 30 30"><rect x="3" y="3" width="15" height="15" fill="#eef" stroke="#557"/><rect x="11" y="13" width="16" height="14" fill="#dde" stroke="#557"/><path d="M13 16h12M13 19h12M13 22h12M6 7h8M6 10h8" stroke="#335" stroke-dasharray="2 1"/></svg></div><span class="mt-2">N/C 数据定义</span>
		</div>
		<div class="main-tab tab-o d-flex">
			<div class="art-box"><svg width="30" height="30" viewBox="0 0 30 30"><path d="M9 4l11-2 2 12H10z" fill="#d8ecff" stroke="#778"/><path d="M3 15h24v9H3z" fill="#bbb" stroke="#555"/><path d="M6 24h18v4H6z" fill="#888"/></svg></div><span class="mt-2">输出设置</span>
		</div>
		<div class="main-tab tab-v d-flex">
			<div class="art-box"><svg width="30" height="30" viewBox="0 0 30 30"><path d="M3 17l12 8 12-8v6l-12 6-12-6z" fill="#e8a030"/><rect x="6" y="14" width="5" height="9" fill="#f0a"/><rect x="12" y="3" width="6" height="21" fill="#47c"/><rect x="19" y="11" width="5" height="11" fill="#3b9"/></svg></div><span class="mt-2">虚拟 N/C 控制器</span>
		</div>
	</div>
	<div class="sub-tabs d-flex bit-text" id="subTabs"></div>
	<div class="d-flex">
		<div class="tree-pane bit-text" id="treePane">
			<svg class="folder-ico" width="14" height="12" viewBox="0 0 14 12"><path d="M.5 2.500h4l1-2h3l1 2h4v9h-13z" fill="#ff0" stroke="#000"/></svg>
			<div class="tree-stem stem-main"></div>
			<div class="tree-stem stem-sub"></div>
		</div>
		<div class="sash-col"><div class="sash-dot"></div></div>
		<div class="cfg-grid">
			<div class="node-canvas bit-text" id="nodeCanvas"></div>
			<div class="scroll-y">
				<div class="scroll-cap cap-node-down"><i class="tri-down"></i></div>
			</div>
			<div class="scroll-x">
				<div class="scroll-cap cap-node-left"><i class="tri-left"></i></div>
				<div class="scroll-thumb thumb-node"></div>
			</div>
			<div class="scroll-x"><div class="scroll-cap cap-node-right"><i class="tri-right"></i></div></div>
		</div>
	</div>
</section>

<!-- event dialog -->
<section class="app-win win-evt">
	<div class="win-head head-short evt-head d-flex align-items-center">
		<svg width="16" height="16"><use href="#palette"/></svg>
		<span>事件 : 攻丝</span>
		<div class="win-btns evt-close"><svg width="14" height="14" viewBox="0 0 14 14"><path d="M2 2l10 10M12 2L2 12" stroke="#222" fill="none"/></svg></div>
	</div>
	<div class="evt-top d-flex align-items-start bit-text">
		<div class="add-word">添加文字</div>
		<div class="combo-field">G_cutcom (G41 - Cutcom (LEFT/RIGHT/OFF))</div>
		<div class="combo-drop d-flex align-items-center justify-content-center"><svg width="11" height="13" viewBox="0 0 11 13"><path d="M3.500 0h4v6H11L5.500 11 0 6h3.500zM0 11.500h11V13H0z" fill="#000"/></svg></div>
		<div class="bin-btn"><svg width="37" height="36" viewBox="0 0 37 36"><path d="M8 8h22l-3 24H11z" fill="#a8b4c0" stroke="#667"/><ellipse cx="19" cy="8" rx="11" ry="4" fill="#dde4ea" stroke="#778"/><path d="M15 4l5-3 3 4" fill="#eef" stroke="#889"/><path d="M15 18l12 12M27 18L15 30" stroke="#e8200c" stroke-width="3"/></svg></div>
	</div>
	<div class="evt-grid">
		<div class="evt-canvas">
			<div class="word-band band-a d-flex align-items-center">
				<div class="word-cell cell-wide d-flex align-items-center justify-content-center"><div class="word-in is-wide d-flex align-items-center"><span class="word-code">PB_CMD_set_cycle_plane</span></div></div>
			</div>
			<div class="word-band band-b d-flex align-items-center">
				<div class="word-cell"><div class="word-in is-pink d-flex align-items-center"><span class="word-big">M</span><span class="word-num">29</span></div></div>
			</div>
			<div class="word-band band-c d-flex align-items-center">
				<div class="word-cell"><div class="word-in d-flex align-items-center"><span class="word-big">G</span><span class="word-num">17</span></div><i class="word-ring"></i></div>
				<div class="word-cell"><div class="word-in d-flex align-items-center"><span class="word-big">G</span><span class="word-num">98</span></div><i class="word-ring"></i></div>
				<div class="word-cell"><div class="word-in d-flex align-items-center"><span class="word-big">G</span><span class="word-num">84</span></div></div>
				<div class="word-cell"><div class="word-in d-flex align-items-center"><span class="word-big">X</span></div></div>
				<div class="word-cell"><div class="word-in d-flex align-items-center"><span class="word-big">Y</span></div></div>
				<div class="word-cell"><div class="word-in d-flex align-items-center"><span class="word-big">Z</span></div></div>
				<div class="word-cell"><div class="word-in d-flex align-items-center"><span class="word-big">R</span></div></div>
				<div class="word-cell"><div class="word-in d-flex align-items-center"><span class="word-big">F</span></div></div>
				<div class="word-cell"><div class="word-in is-raised d-flex align-items-center"><span class="word-big">Q</span></div></div>
			</div>
		</div>
		<div class="scroll-y ms-1">
			<div class="scroll-cap cap-top"><i class="tri-up"></i></div>
			<div class="scroll-thumb thumb-evt-y"></div>
			<div class="scroll-cap cap-bottom"><i class="tri-down"></i></div>
		</div>
		<div class="scroll-x">
			<div class="scroll-cap cap-evt-left"><i class="tri-left"></i></div>
			<div class="scroll-thumb thumb-evt-x"></div>
		</div>
		<div class="scroll-x ms-1"><div class="scroll-cap cap-evt-right"><i class="tri-right"></i></div></div>
	</div>
	<div class="gold-row d-flex bit-text">
		<div class="gold-box gold-a d-flex">
			<div class="gold-btn">默认</div><div class="gold-btn">恢复</div><div class="gold-btn">应用</div>
		</div>
		<div class="gold-box gold-b d-flex">
			<div class="gold-btn">确定</div><div class="gold-btn gold-last">取消</div>
		</div>
	</div>
</section>

<!-- popup menus -->
<div class="pop-menu menu-main bit-text" id="mainMenu"></div>
<div class="pop-menu menu-sub bit-text" id="subMenu"></div>

<script>
	// Pestañas internas
	const subTabs = [['程序', 39, true], ['G 代码', 56], ['M 代码', 56], ['文字汇总', 68], ['文字排序', 68], ['定制命令', 68], ['链接的后处理', 96], ['宏', 26]];
	document.getElementById('subTabs').innerHTML = subTabs.map(([label, width, active]) =>
		active
			? `<div class="sub-tab is-active d-flex align-items-center" style="width:${width}px"><span class="sub-fill">${label}</span></div>`
			: `<div class="sub-tab d-flex align-items-center" style="width:${width}px">${label}</div>`
	).join('');

	// Árbol de secuencias
	const tree = [
		['程序起始序列', 21, 'top'], ['工序起始序列', 21, 'top'], ['刀轨', 21, 'top'],
		['机床控制', 19, 'sub'], ['运动', 19, 'sub'], ['现成循环', 19, 'sub', true], ['杂项', 19, 'sub'],
		['工序结束序列', 21, 'top'], ['程序结束序列', 21, 'top']
	];
	document.getElementById('treePane').insertAdjacentHTML('beforeend', tree.map(([label, height, level, picked]) => {
		const icon = level === 'top' ? 'cube-a' : 'cube-b';
		const size = level === 'top' ? 17 : 15;
		return `<div class="tree-row is-${level} d-flex align-items-center" style="height:${height}px"><svg width="${size}" height="${size}"><use href="#${icon}"/></svg><span class="${picked ? 'tree-pick' : ''}">${label}</span></div>`;
	}).join(''));

	// Eventos del canvas
	const events = [
		[14, '钻孔'], [79, '钻，文本'], [135, '钻，埋头孔'], [191, '钻，深度'], [256, '钻，断屑'],
		[321, '攻丝', null, true], [396, '镗'], [461, '镗，拖动'],
		[526, '快退镗', 'G17 G98 G86 X Y Z R F', 174], [591, '镗，横向偏置后快退', 'G17 G98 G76 X Y Z R F Q', 188], [656, '退刀镗', 'G17 G98 G87 X Y Z R F Q', 188]
	];
	document.getElementById('nodeCanvas').innerHTML = events.map(([top, label, code, noteWidth]) => `
		<div class="ev-minus" style="top:${top + 7}px"></div>
		<div class="ev-btn ${noteWidth === true ? 'is-hot' : ''}" style="top:${top}px"><svg width="16" height="16"><use href="#cube-c"/></svg>${label}</div>
		${code ? `<div class="ev-link" style="top:${top + 13}px"></div>
		<div class="ev-note" style="top:${top - 1}px;width:${noteWidth}px">PB_CMD_set_cycle_plane\n${code}</div>` : ''}
	`).join('');

	// Menús emergentes
	const menu = [
		['新地址'], ['文本'], 0, ['操作员消息'], ['Tcl Comment'], ['命令', 1], ['宏', 1], ['Condition', 1], 0,
		['G_cutcom', 1], ['G_plane', 1], ['G_adjust', 1], ['H', 1], ['G_spin', 1], ['G_return', 1], ['G_motion', 1], ['G_mode', 1],
		['G', 1], ['X', 1], ['Y', 1], ['Z', 1], ['I', 1], ['J', 1], ['K', 1], ['R', 1], ['F', 1], ['M_spindle', 1, 1], ['S', 1], ['T', 1], ['More', 1]
	];
	document.getElementById('mainMenu').innerHTML = menu.map(item => {
		if (!item) return '<div class="pop-rule"></div>';
		return `<div class="pop-item ${item[1] ? 'has-kid' : ''} ${item[2] ? 'is-pick' : ''}">${item[0]}</div>`;
	}).join('');

	const spindle = ['M03-Spindle Direction (CLW/CCLW)', 'M03-CLW Spindle Direction', 'M04-CCLW Spindle Direction', 'M05-Spindle Off', 'M-用户定义表达式'];
	document.getElementById('subMenu').innerHTML = spindle.map((label, i) =>
		`<div class="pop-item ${i === 4 ? 'is-pick' : ''}">${label}</div>`
	).join('');
</script>
</body>
</html>
